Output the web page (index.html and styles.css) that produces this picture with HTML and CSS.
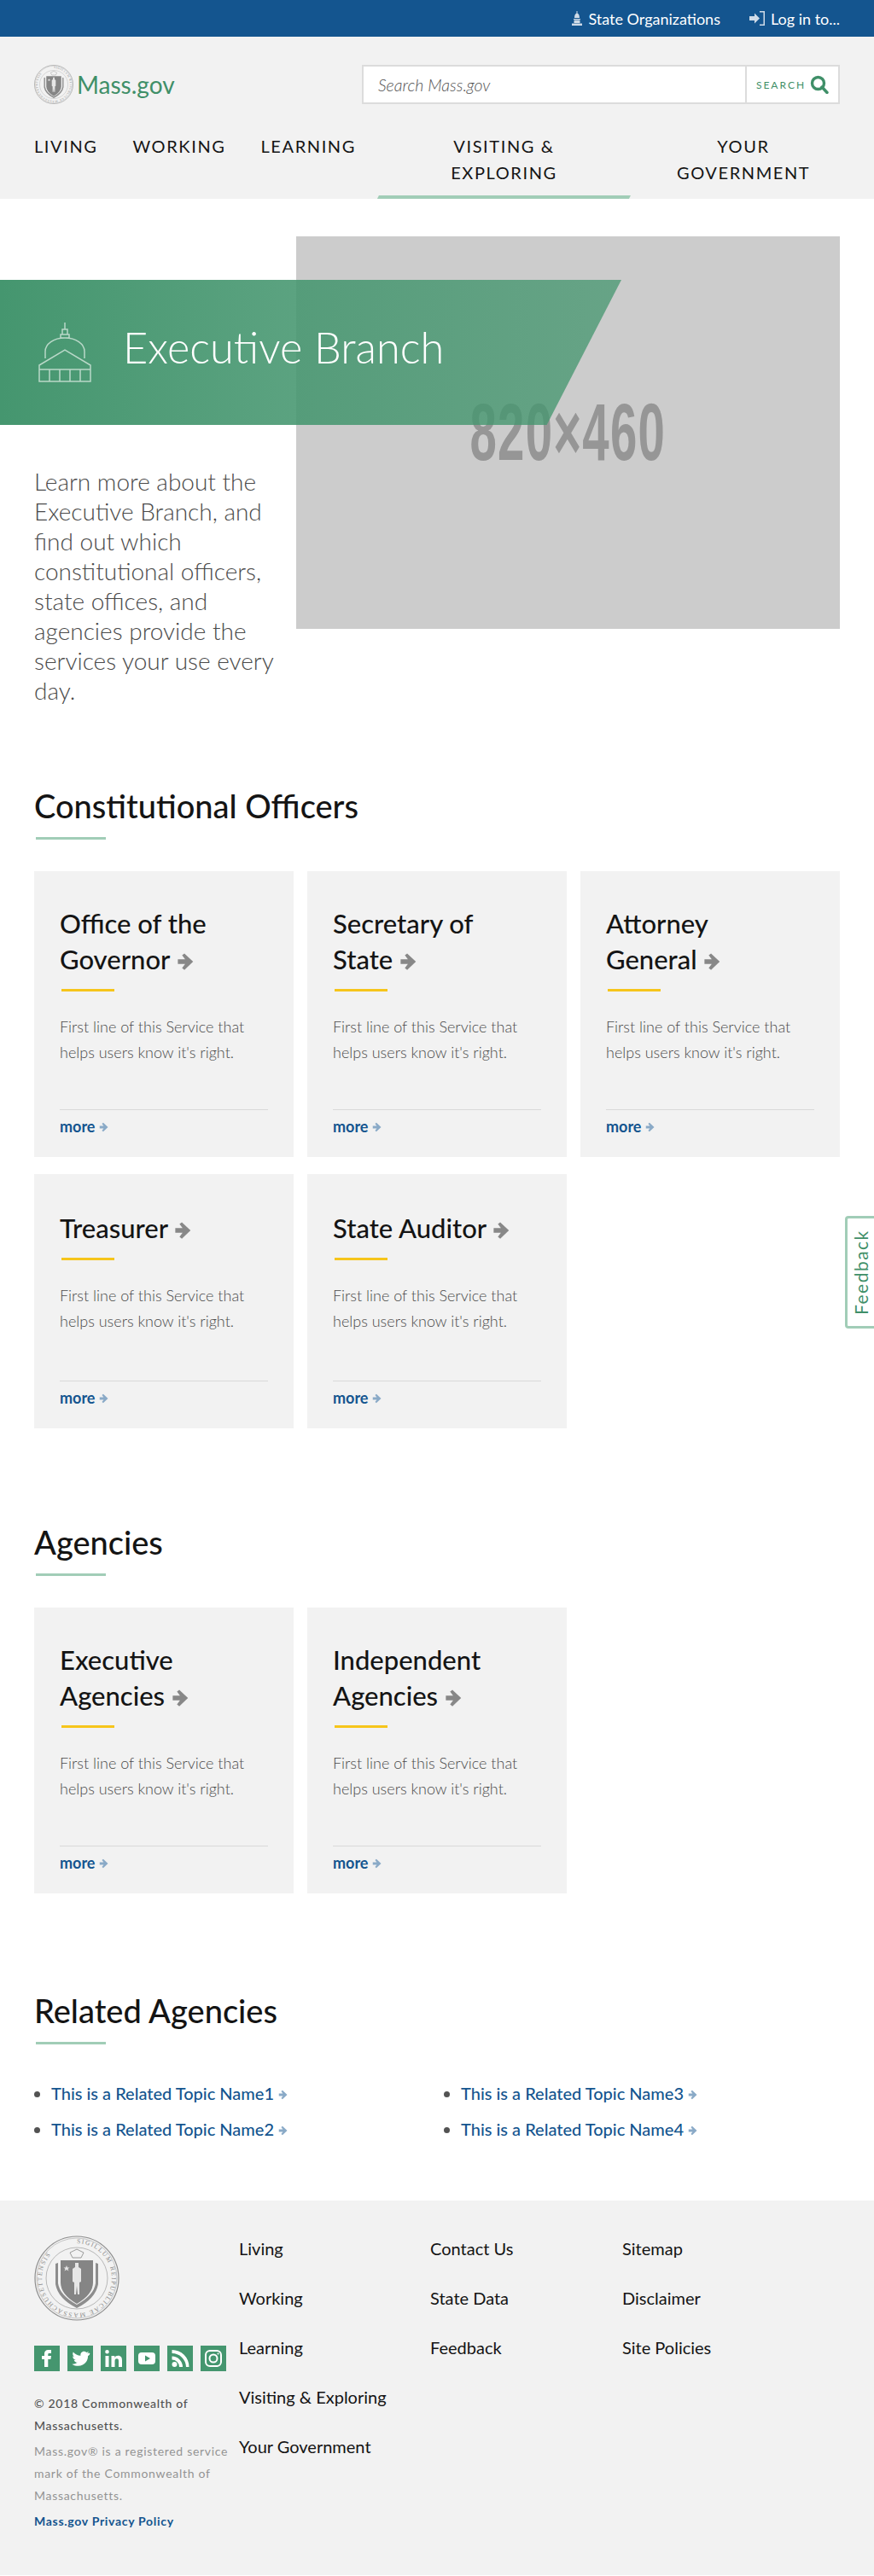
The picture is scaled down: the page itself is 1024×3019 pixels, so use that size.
FILE: index.html
```html
<!DOCTYPE html>
<html lang="en">
  <head>
    <meta charset="UTF-8" />
    <meta name="viewport" content="width=device-width, initial-scale=1.0" />
    <title>Executive Branch | Mass.gov</title>
    <link rel="stylesheet" href="styles.css">
  </head>
  <body>
    <svg class="sprites" width="0" height="0">
      <symbol id="arrow" viewBox="0 0 16 16">
        <path d="M1 6h6.2L4.6 2.6 6.6 1 14 8l-7.4 7-2-1.600L7.200 10H1z" />
      </symbol>
      <symbol id="shield" viewBox="0 0 100 100">
        <circle cx="50" cy="50" r="49" fill="none" stroke="#8d8d8d" stroke-width="1.200" />
        <circle cx="50" cy="50" r="47" fill="none" stroke="#a8a8a8" stroke-width=".6" />
        <circle cx="50" cy="50" r="36" fill="none" stroke="#a8a8a8" stroke-width=".8" />
        <path d="M31 29h38v26q0 14-19 25-19-11-19-25z" fill="#858585" />
        <path d="M48 32h4v5l3 2v15l-2 1v14h-2l-1-10-1 10h-2V55l-2-1V39l3-2z" fill="#e6e6e6" />
        <path d="M38 35l1 2.500h2.500l-2 1.500 1 2.500-2.500-1.500-2.500 1.500 1-2.500-2-1.500H37z" fill="#e6e6e6" />
        <path d="M25 33l3-1v24q2 14 22 25 20-11 22-25V32l3 1v24q-3 17-25 28-22-11-25-28z" fill="#8d8d8d" />
        <path d="M42 20l8-4 8 4-3 6H45z" fill="none" stroke="#9a9a9a" />
      </symbol>
    </svg>

    <header class="site-header">
      <div class="utility-bar">
        <a class="utility-link" href="#">
          <svg width="14" height="17" viewBox="0 0 14 17" fill="#cfdbe8"><path d="M6.500 0h1v2.500c1.500.5 2.500 2.500 2.500 5.500H4c0-3 1-5 2.500-5.500zM3 9h8v1H3zM3.500 10.500h7V14h-7zM1 14.500h12V17H1z" /></svg>
          State Organizations
        </a>
        <a class="utility-link" href="#">
          <svg width="19" height="17" viewBox="0 0 19 17" fill="#cfdbe8"><path d="M0 6h6V2.500L12 8.500l-6 6V11H0zM12 0h6v17h-6v-1.500h4.500v-14H12z" /></svg>
          Log in to...
        </a>
      </div>
      <div class="brand-row">
        <a class="logo" href="#">
          <svg class="logo-seal" viewBox="0 0 100 100">
            <use href="#shield" width="100" height="100" />
            <path id="sealRingSmall" fill="none" d="M50 9a41 41 0 1 1-.01 0" />
            <text class="seal-text"><textPath href="#sealRingSmall">SIGILLUM REIPUBLICAE MASSACHUSETTENSIS</textPath></text>
          </svg>
          <span>Mass.gov</span>
        </a>
        <form class="search">
          <input type="text" placeholder="Search Mass.gov" />
          <button type="submit">
            SEARCH
            <svg width="22" height="22" viewBox="0 0 22 22" fill="none" stroke="#3f8f68" stroke-width="3.400"><circle cx="9.500" cy="9.500" r="7" /><path d="M14 14l6 6.500" stroke-linecap="round" /></svg>
          </button>
        </form>
      </div>
      <nav class="main-nav">
        <a href="#">Living</a>
        <a href="#">Working</a>
        <a href="#">Learning</a>
        <a class="wide active" href="#">Visiting &amp; Exploring</a>
        <a class="wide" href="#">Your Government</a>
      </nav>
    </header>

    <section class="hero">
      <div class="hero-banner">
        <svg width="62" height="70" viewBox="0 0 62 70" fill="none" stroke="#b9d8c8" stroke-width="1.500">
          <path d="M31 0v8M28 8h6v6h-6zM26 14h10v4H26zM8 42V34C8 25 18 18 31 18s23 7 23 16v8" />
          <path d="M1 50l30-18 30 18v5H1zM1 55h60v14H1zM13 55v14M25 55v14M37 55v14M49 55v14" />
        </svg>
        <h1>Executive Branch</h1>
      </div>
      <p class="hero-text">Learn more about the Executive Branch, and find out which constitutional officers, state offices, and agencies provide the services your use every day.</p>
      <div class="hero-image"><span>820×460</span></div>
    </section>

    <main>
      <section class="section officers">
        <h2 class="section-title">Constitutional Officers</h2>
        <div class="card-grid">
          <a class="card" href="#">
            <h3>Office of the Governor <svg class="arrow"><use href="#arrow" /></svg></h3>
            <p>First line of this Service that helps users know it's right.</p>
            <span class="more">more <svg class="arrow"><use href="#arrow" /></svg></span>
          </a>
          <a class="card" href="#">
            <h3>Secretary of State <svg class="arrow"><use href="#arrow" /></svg></h3>
            <p>First line of this Service that helps users know it's right.</p>
            <span class="more">more <svg class="arrow"><use href="#arrow" /></svg></span>
          </a>
          <a class="card" href="#">
            <h3>Attorney General <svg class="arrow"><use href="#arrow" /></svg></h3>
            <p>First line of this Service that helps users know it's right.</p>
            <span class="more">more <svg class="arrow"><use href="#arrow" /></svg></span>
          </a>
          <a class="card short" href="#">
            <h3>Treasurer <svg class="arrow"><use href="#arrow" /></svg></h3>
            <p>First line of this Service that helps users know it's right.</p>
            <span class="more">more <svg class="arrow"><use href="#arrow" /></svg></span>
          </a>
          <a class="card short" href="#">
            <h3>State Auditor <svg class="arrow"><use href="#arrow" /></svg></h3>
            <p>First line of this Service that helps users know it's right.</p>
            <span class="more">more <svg class="arrow"><use href="#arrow" /></svg></span>
          </a>
        </div>
      </section>

      <section class="section agencies">
        <h2 class="section-title">Agencies</h2>
        <div class="card-grid">
          <a class="card" href="#">
            <h3>Executive Agencies <svg class="arrow"><use href="#arrow" /></svg></h3>
            <p>First line of this Service that helps users know it's right.</p>
            <span class="more">more <svg class="arrow"><use href="#arrow" /></svg></span>
          </a>
          <a class="card" href="#">
            <h3>Independent Agencies <svg class="arrow"><use href="#arrow" /></svg></h3>
            <p>First line of this Service that helps users know it's right.</p>
            <span class="more">more <svg class="arrow"><use href="#arrow" /></svg></span>
          </a>
        </div>
      </section>

      <section class="section related">
        <h2 class="section-title">Related Agencies</h2>
        <ul class="related-list">
          <li><a href="#">This is a Related Topic Name1 <svg class="arrow"><use href="#arrow" /></svg></a></li>
          <li><a href="#">This is a Related Topic Name3 <svg class="arrow"><use href="#arrow" /></svg></a></li>
          <li><a href="#">This is a Related Topic Name2 <svg class="arrow"><use href="#arrow" /></svg></a></li>
          <li><a href="#">This is a Related Topic Name4 <svg class="arrow"><use href="#arrow" /></svg></a></li>
        </ul>
      </section>
    </main>

    <a class="feedback" href="#">Feedback</a>

    <footer class="site-footer">
      <div class="footer-info">
        <svg class="footer-seal" viewBox="0 0 100 100">
          <use href="#shield" width="100" height="100" />
          <path id="sealRingLarge" fill="none" d="M50 9a41 41 0 1 1-.01 0" />
          <text class="seal-text"><textPath href="#sealRingLarge">SIGILLUM REIPUBLICAE MASSACHUSETTENSIS</textPath></text>
        </svg>
        <div class="social">
          <a href="#"><svg viewBox="0 0 30 30" fill="#fff"><path d="M12 25V16H9v-4h3V9.500C12 6.500 13.800 5 16.500 5H20v4h-2.300c-1 0-1.400.5-1.400 1.400V12H20l-.6 4h-3.100v9z" /></svg></a>
          <a href="#"><svg viewBox="0 0 30 30" fill="#fff"><path d="M25.500 8.500c-.8.4-1.600.6-2.400.7.900-.5 1.500-1.300 1.800-2.300-.8.500-1.700.8-2.600 1-1.700-1.800-4.600-1.600-6.100.3-.8 1.100-1 2.400-.7 3.600-3.500-.2-6.600-1.800-8.700-4.400-1.100 1.900-.6 4.400 1.300 5.700-.7 0-1.300-.2-1.900-.5 0 2 1.400 3.800 3.400 4.200-.6.200-1.300.2-1.900.1.600 1.700 2.100 2.900 4 2.900-1.900 1.500-4.300 2.100-6.400 1.900 6 3.800 13.200 2.400 16.700-2.600 1.400-2.100 2.100-4.500 2-6.900.9-.6 1.700-1.300 2.400-2.700z" /></svg></a>
          <a href="#"><svg viewBox="0 0 30 30" fill="#fff"><path d="M5.500 12h4v13h-4zM7.500 5a2.300 2.300 0 1 1 0 4.600 2.300 2.300 0 0 1 0-4.600zM12.500 12h3.800v1.900c.8-1.300 2.200-2.200 4-2.200 3.500 0 4.700 2.200 4.700 5.700V25h-4v-6.800c0-1.700-.4-3-2.100-3-1.800 0-2.400 1.300-2.400 3V25h-4z" /></svg></a>
          <a href="#"><svg viewBox="0 0 30 30"><rect x="5" y="8" width="20" height="14" rx="4" fill="#fff" /><path d="M13 11.500l6 3.500-6 3.500z" fill="#45966f" /></svg></a>
          <a href="#"><svg viewBox="0 0 30 30" fill="#fff"><circle cx="8.500" cy="22" r="3" /><path d="M5.500 12.500v4a8.500 8.500 0 0 1 8.500 8.500h4A12.500 12.500 0 0 0 5.500 12.500z" /><path d="M5.500 5v4A16.500 16.500 0 0 1 22 25h3.500A20 20 0 0 0 5.500 5z" /></svg></a>
          <a href="#"><svg viewBox="0 0 30 30" fill="none" stroke="#fff" stroke-width="2"><rect x="6" y="6" width="18" height="18" rx="5" /><circle cx="15" cy="15" r="4.500" /><circle cx="20.500" cy="9.500" r="1" fill="#fff" stroke="none" /></svg></a>
        </div>
        <p class="copyright">© 2018 Commonwealth of Massachusetts.</p>
        <p class="service-mark">Mass.gov® is a registered service mark of the Commonwealth of Massachusetts.</p>
        <a class="privacy" href="#">Mass.gov Privacy Policy</a>
      </div>
      <ul class="footer-links">
        <li><a href="#">Living</a></li>
        <li><a href="#">Working</a></li>
        <li><a href="#">Learning</a></li>
        <li><a href="#">Visiting &amp; Exploring</a></li>
        <li><a href="#">Your Government</a></li>
      </ul>
      <ul class="footer-links">
        <li><a href="#">Contact Us</a></li>
        <li><a href="#">State Data</a></li>
        <li><a href="#">Feedback</a></li>
      </ul>
      <ul class="footer-links">
        <li><a href="#">Sitemap</a></li>
        <li><a href="#">Disclaimer</a></li>
        <li><a href="#">Site Policies</a></li>
      </ul>
    </footer>
  </body>
</html>
```

FILE: styles.css
```css
* {
  box-sizing: border-box;
  margin: 0;
  padding: 0;
}

body {
  position: relative;
  font-family: Lato, "Open Sans", Arial, sans-serif;
  color: #141414;
  background-color: #fff;
}

a {
  color: inherit;
  text-decoration: none;
}

ul {
  list-style: none;
}

.sprites {
  position: absolute;
}

.seal-text {
  font-family: "Liberation Serif", serif;
  font-size: 7.400px;
  letter-spacing: 1.500px;
  fill: #888;
}

.site-header {
  background-color: #f2f2f2;
  height: 233px;
}

.utility-bar {
  display: flex;
  justify-content: flex-end;
  align-items: center;
  gap: 34px;
  height: 43px;
  padding-right: 40px;
  background-color: #14558f;
}

.utility-link {
  display: flex;
  align-items: center;
  gap: 6px;
  font-size: 18px;
  color: #fff;
}

.brand-row {
  display: flex;
  justify-content: space-between;
  align-items: center;
  padding: 33px 40px 0;
}

.logo {
  display: flex;
  align-items: center;
  gap: 4px;
  font-size: 28px;
  color: #3f8f68;
}

.logo-seal {
  width: 46px;
  height: 46px;
}

.search {
  display: flex;
  width: 560px;
  height: 46px;
  border: 2px solid #dcdcdc;
  background-color: #fff;
}

.search input {
  flex: 1;
  padding: 0 17px;
  border: none;
  font-family: inherit;
  font-size: 19.500px;
  font-style: italic;
  font-weight: 300;
  outline: none;
}

.search input::placeholder {
  color: #535353;
  opacity: 1;
}

.search button {
  display: flex;
  align-items: center;
  justify-content: center;
  gap: 5px;
  width: 109px;
  border: none;
  border-left: 2px solid #dcdcdc;
  background-color: #fff;
  font-family: inherit;
  font-size: 12px;
  letter-spacing: 2px;
  color: #3f8f68;
}

.main-nav {
  display: flex;
  align-items: flex-start;
  margin-top: 34px;
  padding: 0 40px;
  font-size: 20px;
  line-height: 31px;
  letter-spacing: 1.600px;
  text-transform: uppercase;
}

.main-nav a {
  margin-right: 41px;
}

.main-nav .wide {
  position: relative;
  flex: none;
  width: 226px;
  height: 77px;
  margin-right: 0;
  padding: 0 35px;
  text-align: center;
}

.main-nav .wide.active {
  width: 297px;
  margin: 0 19px 0 -16px;
  padding: 0 60px;
}

.main-nav .active::after {
  content: "";
  position: absolute;
  left: 0;
  right: 0;
  bottom: 0;
  height: 4px;
  background-color: #a1cdb7;
  clip-path: polygon(2px 0, 100% 0, calc(100% - 2px) 100%, 0 100%);
}

.hero {
  position: relative;
  display: flex;
  justify-content: space-between;
  align-items: flex-start;
  padding: 44px 40px 0;
  height: 686px;
}

.hero-banner {
  position: absolute;
  z-index: 1;
  top: 95px;
  left: 0;
  display: flex;
  align-items: center;
  gap: 37px;
  width: 728px;
  height: 170px;
  padding-left: 45px;
  background-image: linear-gradient(90deg, #45966f 0%, rgba(69, 150, 111, .75) 100%);
  clip-path: polygon(0 0, 100% 0, 88% 100%, 0 100%);
}

.hero-banner h1 {
  margin-bottom: 14px;
  font-size: 50.500px;
  font-weight: 300;
  color: #fff;
}

.hero-text {
  width: 295px;
  margin-top: 270px;
  font-size: 28px;
  font-weight: 300;
  line-height: 35px;
  color: #4a4a4a;
}

.hero-image {
  display: flex;
  align-items: center;
  justify-content: center;
  width: 637px;
  height: 460px;
  background-color: #ccc;
}

.hero-image span {
  font-family: "Liberation Sans", sans-serif;
  font-size: 94px;
  font-weight: 700;
  letter-spacing: 2px;
  color: #969696;
  transform: scaleX(.6);
}

.section {
  padding: 0 40px;
}

.section-title {
  font-size: 38px;
  font-weight: 500;
  line-height: 50px;
}

.section-title::after {
  content: "";
  display: block;
  width: 82px;
  height: 3px;
  margin: 12px 0 37px 2px;
  background-color: #a1cdb7;
}

.card-grid {
  display: grid;
  grid-template-columns: repeat(3, 304px);
  gap: 20px 16px;
}

.card {
  display: flex;
  flex-direction: column;
  padding: 40px 30px 25px;
  background-color: #f2f2f2;
}

.card.short {
  min-height: 298px;
  padding-top: 42px;
}

.card h3 {
  max-width: 220px;
  font-size: 31px;
  font-weight: 500;
  line-height: 42px;
}

.card h3::after {
  content: "";
  display: block;
  width: 62px;
  height: 3px;
  margin: 14px 0 26px 2px;
  background-color: #f6c51b;
}

.arrow {
  display: inline-block;
  width: 22px;
  height: 22px;
  fill: #888;
  vertical-align: -2px;
}

.card p {
  margin-bottom: auto;
  padding-bottom: 52px;
  font-size: 18px;
  font-weight: 300;
  line-height: 30px;
  color: #4a4a4a;
}

.more {
  padding-top: 8px;
  border-top: 1px solid #d9d9d9;
  font-size: 18px;
  font-weight: 700;
  color: #14558f;
}

.more .arrow {
  width: 12px;
  height: 12px;
  fill: #8aaac7;
  vertical-align: 0;
}

.agencies {
  margin-top: 108px;
}

.related {
  margin-top: 112px;
}

.related-list {
  display: grid;
  grid-template-columns: 480px 444px;
  row-gap: 12px;
  margin-top: 42px;
  padding-left: 20px;
  font-size: 20px;
  font-weight: 500;
  line-height: 30px;
}

.related-list li {
  list-style: disc outside;
  color: #535353;
}

.related-list li::marker {
  font-size: 20px;
}

.related-list a {
  color: #14558f;
}

.related-list .arrow {
  width: 12px;
  height: 12px;
  fill: #8aaac7;
  vertical-align: 0;
}

.feedback {
  position: absolute;
  top: 1425px;
  right: 0;
  width: 34px;
  height: 132px;
  border: 3px solid #a1cdb7;
  border-left-width: 0;
  border-radius: 0 4px 4px 0;
  background-color: #fff;
  font-size: 21px;
  line-height: 31px;
  letter-spacing: 1.500px;
  text-align: center;
  color: #3f8f68;
  writing-mode: vertical-rl;
  transform: rotate(180deg);
}

.site-footer {
  display: grid;
  grid-template-columns: 240px 224px 225px 1fr;
  gap: 0;
  height: 439px;
  margin-top: 69px;
  padding: 41px 0 0 40px;
  background-color: #f2f2f2;
}

.footer-seal {
  display: block;
  width: 100px;
  height: 100px;
  margin-bottom: 29px;
}

.social {
  display: flex;
  gap: 9px;
  margin-bottom: 25px;
}

.social a {
  display: block;
  flex: none;
  width: 30px;
  height: 30px;
  background-color: #45966f;
}

.social svg {
  display: block;
  width: 30px;
  height: 30px;
}

.copyright,
.service-mark,
.privacy {
  font-size: 14px;
  line-height: 26px;
  letter-spacing: .7px;
}

.copyright {
  color: #535353;
  font-weight: 500;
}

.service-mark {
  margin-top: 4px;
  color: #949494;
  font-weight: 400;
}

.privacy {
  display: block;
  margin-top: 4px;
  color: #14558f;
  font-weight: 700;
}

.footer-links {
  display: flex;
  flex-direction: column;
  gap: 28px;
  font-size: 20px;
  line-height: 30px;
  color: #141414;
}
```
